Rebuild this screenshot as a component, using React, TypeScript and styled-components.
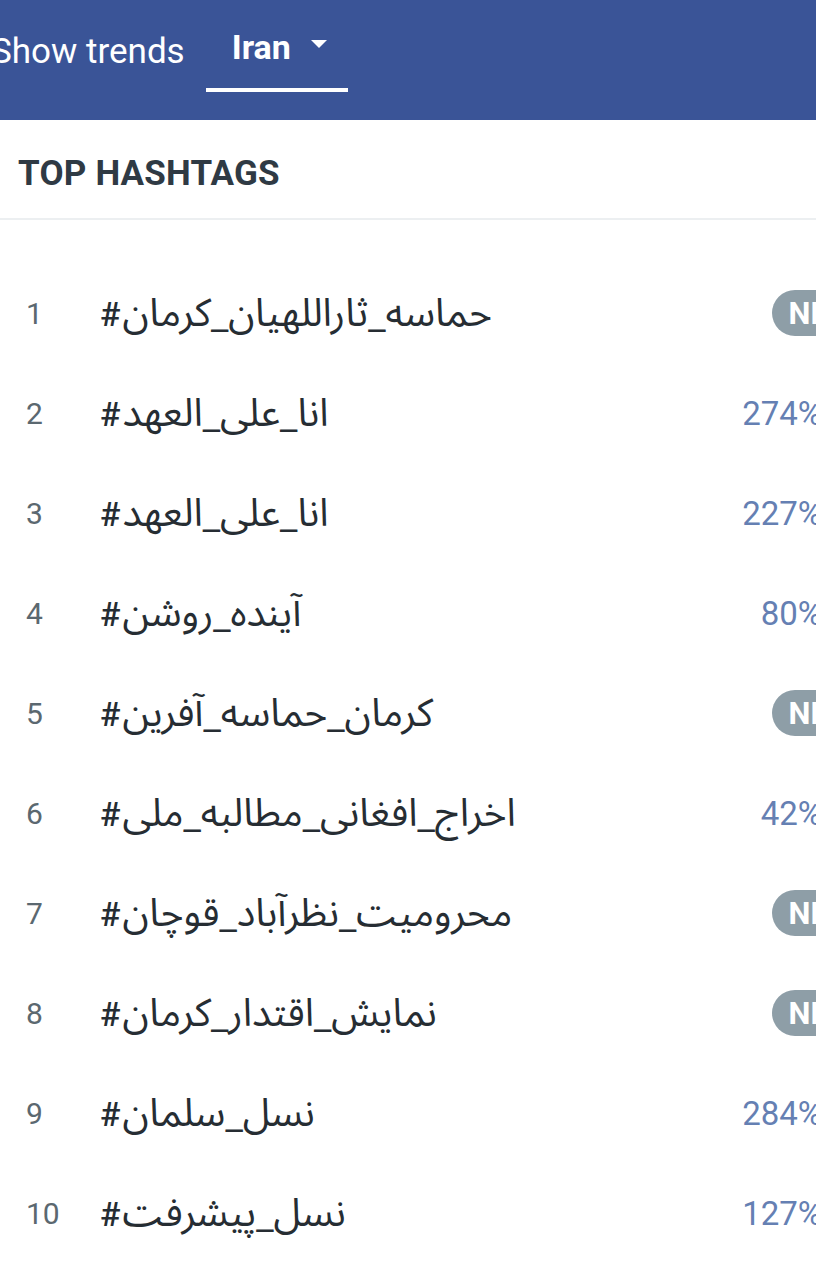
import styled, { createGlobalStyle } from 'styled-components'

const GlobalStyle = createGlobalStyle`
  html, body {
    margin: 0;
    padding: 0;
    background: #ffffff;
    overflow: hidden;
  }
  body {
    font-family: Roboto, 'Noto Sans', 'DejaVu Sans', sans-serif;
  }
`

const Page = styled.div`
  width: 816px;
  height: 1280px;
  overflow: hidden;
  background: #ffffff;
`

const Header = styled.header`
  height: 120px;
  box-sizing: border-box;
  background: #3a5497;
  display: flex;
  align-items: flex-start;
  padding-bottom: 28px;
`

const ShowLabel = styled.div`
  height: 92px;
  margin-left: -9px;
  padding-top: 10px;
  box-sizing: border-box;
  display: flex;
  align-items: center;
  color: #ffffff;
  font-size: 35px;
  white-space: nowrap;
`

const Tab = styled.button`
  height: 92px;
  margin-left: 21px;
  padding: 6px 21px 0 26px;
  box-sizing: border-box;
  display: flex;
  align-items: center;
  gap: 20px;
  background: transparent;
  border: 0;
  border-bottom: 4px solid #ffffff;
  color: #ffffff;
  font-family: Roboto, sans-serif;
  font-size: 34px;
  font-weight: 700;
  cursor: pointer;
`

const Caret = styled.span`
  width: 0;
  height: 0;
  border-left: 8px solid transparent;
  border-right: 8px solid transparent;
  border-top: 8px solid #ffffff;
  margin-top: -6px;
`

const SectionTitle = styled.h2`
  margin: 0;
  height: 100px;
  box-sizing: border-box;
  padding: 8px 0 0 18px;
  display: flex;
  align-items: center;
  border-bottom: 2px solid #eceff1;
  color: #2f3a44;
  font-size: 35px;
  font-weight: 700;
  letter-spacing: 0.2px;
`

const List = styled.ol`
  list-style: none;
  margin: 0;
  padding: 43px 0 0;
`

const Row = styled.li`
  height: 100px;
  display: flex;
  align-items: center;
`

const Rank = styled.span`
  width: 74px;
  padding-left: 26px;
  flex-shrink: 0;
  color: #5b6870;
  font-size: 30px;
`

const Hashtag = styled.span`
  flex: 1;
  display: flex;
  align-items: baseline;
  gap: 2px;
  white-space: nowrap;
  color: #262d33;
`

const HashMark = styled.span`
  font-size: 34px;
  font-weight: 500;
`

const TagText = styled.span`
  font-family: 'Noto Sans Arabic', 'DejaVu Sans', sans-serif;
  font-size: 39px;
`

const Change = styled.span`
  margin-right: -6px;
  color: #6580b3;
  font-size: 33px;
`

const NewBadge = styled.span`
  height: 46px;
  margin-right: -56px;
  padding: 0 17px;
  display: flex;
  align-items: center;
  border-radius: 23px;
  background: #8e9ea7;
  color: #ffffff;
  font-size: 31px;
  font-weight: 700;
`

type Trend = { tag: string; change: string | null }

const trends: Trend[] = [
  { tag: 'حماسه_ثاراللهیان_کرمان', change: null },
  { tag: 'انا_علی_العهد', change: '274%' },
  { tag: 'انا_علی_العهد', change: '227%' },
  { tag: 'آینده_روشن', change: '80%' },
  { tag: 'کرمان_حماسه_آفرین', change: null },
  { tag: 'اخراج_افغانی_مطالبه_ملی', change: '42%' },
  { tag: 'محرومیت_نظرآباد_قوچان', change: null },
  { tag: 'نمایش_اقتدار_کرمان', change: null },
  { tag: 'نسل_سلمان', change: '284%' },
  { tag: 'نسل_پیشرفت', change: '127%' },
]

const App = () => {
  return (
    <Page>
      <GlobalStyle />
      <Header>
        <ShowLabel>Show trends</ShowLabel>
        <Tab>
          Iran
          <Caret />
        </Tab>
      </Header>
      <SectionTitle>TOP HASHTAGS</SectionTitle>
      <List>
        {trends.map((t, i) => (
          <Row key={i}>
            <Rank>{i + 1}</Rank>
            <Hashtag>
              <HashMark>#</HashMark>
              <TagText dir="rtl">{t.tag}</TagText>
            </Hashtag>
            {t.change ? <Change>{t.change}</Change> : <NewBadge>NEW</NewBadge>}
          </Row>
        ))}
      </List>
    </Page>
  )
}

export default App
